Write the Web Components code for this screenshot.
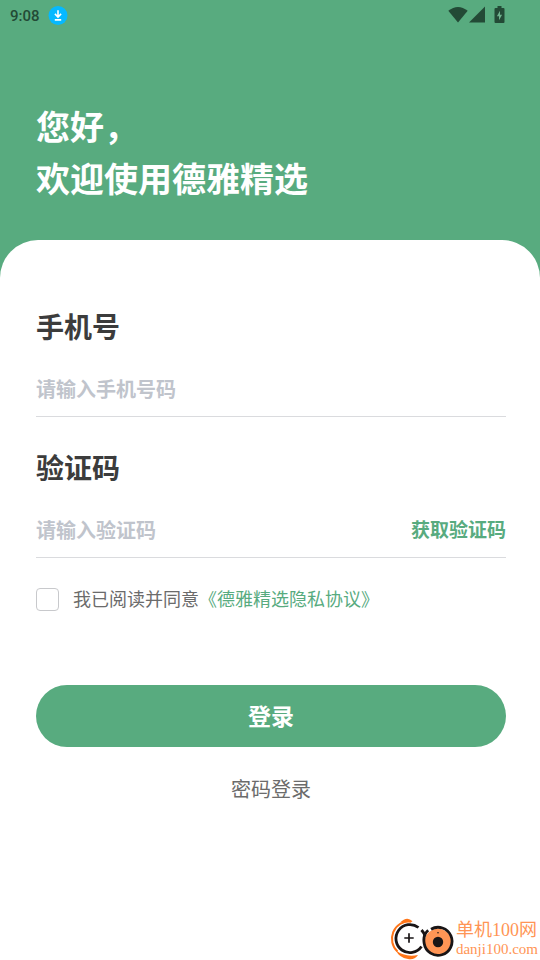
<!DOCTYPE html>
<html lang="zh-CN">
<head>
<meta charset="utf-8">
<meta name="viewport" content="width=device-width, initial-scale=1">
<title>登录</title>
<style>
  html, body { margin: 0; height: 100%; }
  body {
    --brand: #58ab7f;
    --ink: #3c3c3c;
    --muted: #6b6b6b;
    --hint: #c0c4cc;
    --line: #dadbde;
    font-family: "Noto Sans CJK SC", sans-serif;
    color: var(--ink);
    background: var(--brand);
  }
</style>
</head>
<body>
<login-page></login-page>

<script>
function define(name, html, setup) {
  const template = document.createElement('template');
  template.innerHTML = html;
  customElements.define(name, class extends HTMLElement {
    constructor() {
      super();
      this.attachShadow({ mode: 'open' }).append(template.content.cloneNode(true));
    }
    connectedCallback() { if (setup) setup(this, this.shadowRoot); }
  });
}

define('status-bar', `
  <style>
    :host { display: flex; align-items: center; justify-content: space-between; height: 32px; padding: 0 35px 0 10px; color: #234a36; font: 500 15px/20px Roboto, sans-serif; }
    div { display: flex; align-items: center; gap: 8px; }
    .system { gap: 1px; padding-bottom: 2px; }
    svg { display: block; }
    .battery { margin-left: 8px; }
  </style>
  <div>
    <time>9:08</time>
    <svg width="20" height="20" viewBox="0 0 20 20" aria-hidden="true">
      <circle cx="10" cy="9.500" r="9.500" fill="#05b9ff"/>
      <path d="M10 4.300V10.500M6.900 7.900 10 11l3.100-3.100M6.800 13.900h6.400" fill="none" stroke="#fff" stroke-width="1.600"/>
    </svg>
  </div>
  <div class="system">
    <svg width="20" height="18" viewBox="0 0 20 18" aria-hidden="true"><path d="M.3 4.800Q10-3 19.700 4.800L10 16.600Z" fill="currentColor"/></svg>
    <svg width="16" height="18" viewBox="0 0 16 18" aria-hidden="true"><path d="M0 16.500 16 .5V16.500Z" fill="currentColor"/></svg>
    <svg class="battery" width="11" height="18" viewBox="0 0 11 18" aria-hidden="true">
      <path d="M3.500 0h4v2H9.500Q10.500 2 10.500 3V16Q10.500 17 9.500 17H1.500Q.5 17 .5 16V3Q.5 2 1.500 2h2Z" fill="currentColor"/>
      <path d="M6 4.800 2.900 10.300h2.100v4L8.100 8.700H6Z" fill="#6fb38e"/>
    </svg>
  </div>`);

define('welcome-heading', `
  <style>
    :host { display: block; padding: 68px 36px 36px; color: #fff; }
    h1 { margin: 0; font-size: 34px; line-height: 52px; font-weight: 700; }
  </style>
  <h1><slot></slot></h1>`);

define('form-field', `
  <style>
    :host { display: block; }
    label { display: block; font-size: 28px; line-height: 40px; font-weight: 700; }
    .row { display: flex; align-items: center; height: 56px; margin-top: 14px; border-bottom: 1px solid var(--line); }
    input { flex: 1; min-width: 0; height: 40px; padding: 0; border: 0; outline: 0; background: none; color: var(--ink); font: 700 20px/32px "Noto Sans CJK SC", sans-serif; }
    input::placeholder { color: var(--hint); opacity: 1; }
  </style>
  <label for="field"></label>
  <div class="row"><input id="field"><slot></slot></div>`,
  (host, root) => {
    root.querySelector('label').textContent = host.getAttribute('label');
    const input = root.querySelector('input');
    input.placeholder = host.getAttribute('hint');
    input.type = host.getAttribute('type') || 'text';
  });

define('text-button', `
  <style>
    :host { display: block; }
    button { display: block; border: 0; padding: 0; background: none; color: var(--brand); font: 700 19px/32px "Noto Sans CJK SC", sans-serif; cursor: pointer; }
    :host([kind="plain"]) button { margin: 0 auto; color: var(--muted); font-size: 20px; font-weight: 400; }
  </style>
  <button type="button"><slot></slot></button>`);

define('pill-button', `
  <style>
    :host { display: block; }
    button { display: block; width: 100%; height: 62px; padding: 0 0 2px; border: 0; border-radius: 31px; background: var(--brand); color: #fff; font: 700 23px/32px "Noto Sans CJK SC", sans-serif; cursor: pointer; }
  </style>
  <button type="button"><slot></slot></button>`);

define('agreement-check', `
  <style>
    :host { display: flex; align-items: center; gap: 14px; font-size: 18px; line-height: 28px; font-weight: 400; color: var(--muted); }
    input { appearance: none; flex: none; width: 23px; height: 23px; margin: 0; border: 1px solid #c8c9cc; border-radius: 4px; background: #fff; }
    input:checked { background: var(--brand); border-color: var(--brand); }
    span { padding-bottom: 3px; }
    a { color: var(--brand); text-decoration: none; }
  </style>
  <input type="checkbox" id="agree">
  <span><label for="agree">我已阅读并同意</label><a href="#privacy">《德雅精选隐私协议》</a></span>`);

define('site-mark', `
  <style>
    :host { display: flex; justify-content: flex-end; align-items: center; gap: 2px; padding-right: 2px; color: #ff9555; }
    svg { display: block; }
    div { display: flex; flex-direction: column; }
    strong { font: 400 18px/20px "Liberation Serif", "Noto Sans CJK SC", serif; }
    span { font: 15px/18px "Liberation Serif", serif; }
  </style>
  <svg width="64" height="42" viewBox="0 0 64 42" aria-hidden="true">
    <path d="M20 3.200A17.500 17.500 0 0 0 7.500 33.500" fill="none" stroke="#ff7518" stroke-width="2"/>
    <path d="M10 4.500Q17-2.500 22.500 3.200L20.500 4.700Q16 2.800 10 4.500ZM6 32.500Q15 39.500 28 37Q24 42.500 18 41Q9 39.500 6 32.500Z" fill="#ff7518"/>
    <path d="M28.500 9.500A14 14 0 1 0 31.500 28.500" fill="none" stroke="#191516" stroke-width="2.800"/>
    <path d="M31.500 12Q34 14.500 35.200 18.500" fill="none" stroke="#191516" stroke-width="3"/>
    <circle cx="48" cy="24" r="13.300" fill="#ff9555"/>
    <path d="M38.200 12.200Q32.600 17 34.200 25.500A14 14 0 1 0 41 11.200" fill="none" stroke="#191516" stroke-width="2.800"/>
    <path d="M19 15.300v9.400M14.300 20h9.400" stroke="#191516" stroke-width="1.700"/>
    <circle cx="48" cy="24" r="5.200" fill="#191516"/><circle cx="48" cy="14.800" r=".8" fill="#191516"/>
  </svg>
  <div><strong>单机100网</strong><span>danji100.com</span></div>`);

define('login-page', `
  <style>
    :host { display: flex; flex-direction: column; min-height: 100%; background: var(--brand); }
    main { flex: 1; display: flex; flex-direction: column; background: #fff; border-radius: 38px 38px 0 0; padding-top: 66px; }
    form { padding: 0 34px 0 36px; }
    form-field + form-field { margin-top: 30px; }
    agreement-check { margin-top: 26px; }
    pill-button { margin-top: 70px; }
    text-button[kind] { margin-top: 26px; }
    site-mark { margin-top: auto; }
  </style>
  <status-bar></status-bar>
  <welcome-heading>您好，<br>欢迎使用德雅精选</welcome-heading>
  <main>
    <form>
      <form-field label="手机号" hint="请输入手机号码" type="tel"></form-field>
      <form-field label="验证码" hint="请输入验证码"><text-button>获取验证码</text-button></form-field>
      <agreement-check></agreement-check>
      <pill-button>登录</pill-button>
      <text-button kind="plain">密码登录</text-button>
    </form>
    <site-mark></site-mark>
  </main>`);
</script>
</body>
</html>
